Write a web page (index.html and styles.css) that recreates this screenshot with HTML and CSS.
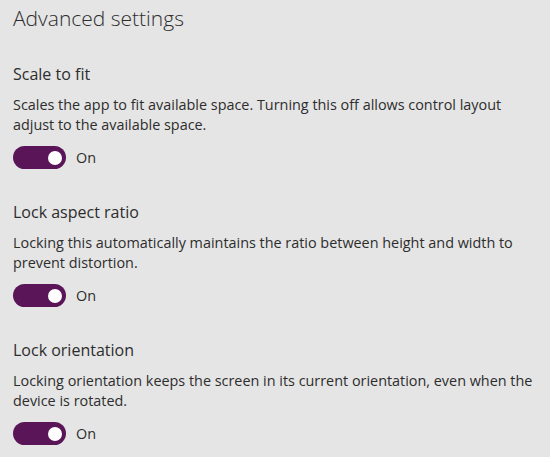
FILE: index.html
```html
<!DOCTYPE html>
<html lang="en">
<head>
    <meta charset="UTF-8">
    <meta name="viewport" content="width=device-width, initial-scale=1.0">
    <title>Advanced settings</title>
    <link rel="stylesheet" href="styles.css">
</head>
<body>
    <main class="settings">
        <h1 class="settings-title">Advanced settings</h1>

        <section class="setting">
            <h2 class="setting-name">Scale to fit</h2>
            <p class="setting-desc">Scales the app to fit available space. Turning this off allows control layout adjust to the available space.</p>
            <div class="toggle">
                <span class="toggle-track"><span class="toggle-knob"></span></span>
                <span class="toggle-label">On</span>
            </div>
        </section>

        <section class="setting">
            <h2 class="setting-name">Lock aspect ratio</h2>
            <p class="setting-desc">Locking this automatically maintains the ratio between height and width to prevent distortion.</p>
            <div class="toggle">
                <span class="toggle-track"><span class="toggle-knob"></span></span>
                <span class="toggle-label">On</span>
            </div>
        </section>

        <section class="setting">
            <h2 class="setting-name">Lock orientation</h2>
            <p class="setting-desc">Locking orientation keeps the screen in its current orientation, even when the device is rotated.</p>
            <div class="toggle">
                <span class="toggle-track"><span class="toggle-knob"></span></span>
                <span class="toggle-label">On</span>
            </div>
        </section>
    </main>
</body>
</html>
```

FILE: styles.css
```css
/* General Styles */
body {
    margin: 0;
    background-color: #e5e5e5;
    font-family: 'Open Sans', 'Noto Sans', sans-serif;
    font-variant-ligatures: none;
    color: #2d2d2d;
}

.settings {
    padding: 3px 13px 0;
    width: 525px;
}

.settings-title {
    margin: 0;
    font-size: 21px;
    font-weight: 300;
    line-height: 30px;
}

.setting {
    margin-top: 31px;
}

.setting:first-of-type {
    margin-top: 29px;
}

.setting-name {
    margin: 0;
    font-size: 16px;
    font-weight: 400;
    line-height: 24px;
}

.setting-desc {
    margin: 9px 0 0;
    font-size: 14.4px;
    line-height: 20px;
}

/* Toggle switch */
.toggle {
    display: flex;
    align-items: center;
    gap: 10px;
    margin-top: 11px;
}

.toggle-track {
    position: relative;
    width: 53px;
    height: 23px;
    border-radius: 12px;
    background-color: #5a1458;
}

.toggle-knob {
    position: absolute;
    top: 4.5px;
    right: 4.5px;
    width: 14px;
    height: 14px;
    border-radius: 50%;
    background-color: #ffffff;
}

.toggle-label {
    font-size: 14.4px;
    line-height: 20px;
}
```
